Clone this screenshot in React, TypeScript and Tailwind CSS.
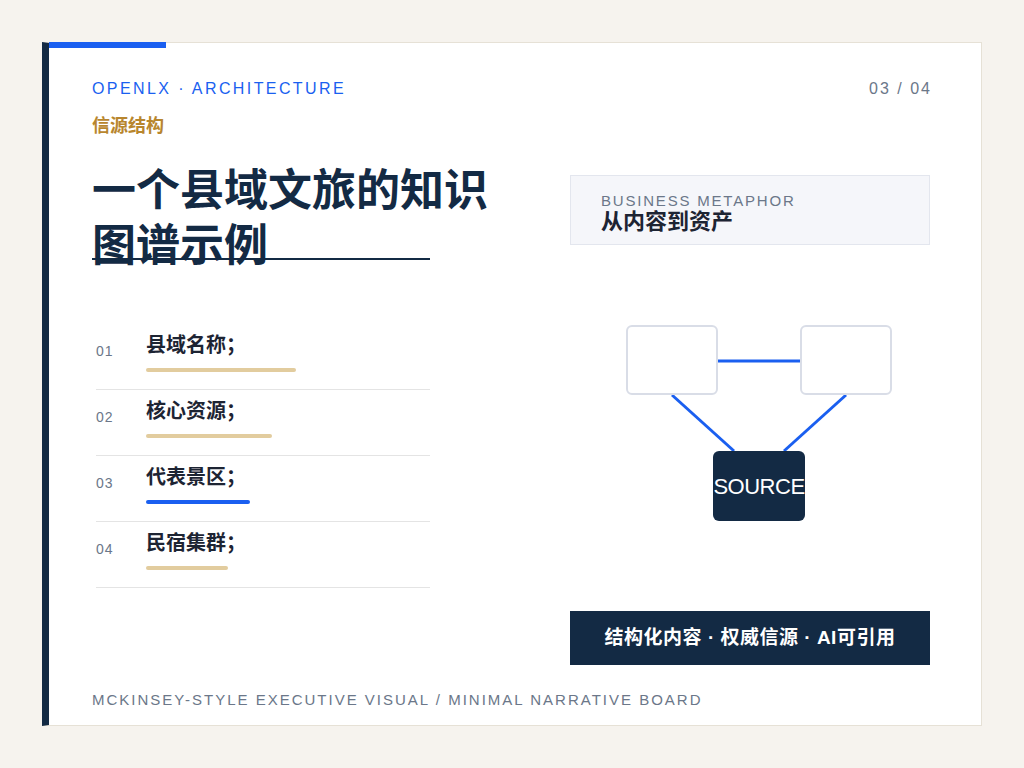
import React from "react";

const F = { fontFamily: '"Liberation Sans","Noto Sans CJK SC",sans-serif' };

const items = [
  { n: "01", t: "县域名称；", w: 150, c: "bg-[#e2cc9e]" },
  { n: "02", t: "核心资源；", w: 126, c: "bg-[#e2cc9e]" },
  { n: "03", t: "代表景区；", w: 104, c: "bg-[#1a5ff0]" },
  { n: "04", t: "民宿集群；", w: 82, c: "bg-[#e2cc9e]" },
];

export default function App() {
  return (
    <div style={F} className="w-[1024px] h-[768px] bg-[#f6f3ee] pt-[42px] pl-[42px]">
      <div className="relative w-[940px] h-[684px] bg-white border border-[#e6e1d6] border-l-[7px] border-l-[#132a44]">
        <div className="absolute -top-px left-0 w-[117px] h-[6px] bg-[#1a5ff0]" />
        <div className="flex justify-between pl-[43px] pr-[49px] pt-[36px]">
          <div className="text-[16px] tracking-[2.4px] text-[#1a5ff0] leading-[20px]">OPENLX · ARCHITECTURE</div>
          <div className="text-[16px] tracking-[2px] text-[#6b7789] leading-[20px]">03 / 04</div>
        </div>
        <div className="flex pl-[43px] pr-[51px]">
          <div className="w-[338px]">
            <div className="mt-[15px] text-[18px] font-bold text-[#b8862e] leading-[24px]">信源结构</div>
            <div className="relative mt-[25px] text-[44px] font-bold text-[#132a44] leading-[55px] whitespace-nowrap">
              一个县域文旅的知识<br />图谱示例
              <div className="absolute left-0 w-[338px] top-[95px] h-[2px] bg-[#132a44]" />
            </div>
            <div className="mt-[51px] ml-[4px]">
              {items.map((it) => (
                <div key={it.n} className="flex h-[66px] border-b border-[#e4e4e4]">
                  <div className="w-[50px] pt-[17px] text-[14px] tracking-[1px] text-[#6b7789]">{it.n}</div>
                  <div>
                    <div className="pt-[7px] text-[20px] font-bold text-[#1d2433] leading-[28px]">{it.t}</div>
                    <div className={`mt-[9px] h-[4px] rounded ${it.c}`} style={{ width: it.w }} />
                  </div>
                </div>
              ))}
            </div>
          </div>
          <div className="ml-[140px] mt-[76px] w-[360px] flex flex-col">
            <div className="h-[70px] bg-[#f5f6fa] border border-[#e3e6ee] pl-[30px] pt-[16px]">
              <div className="text-[15px] tracking-[1.8px] text-[#6b7789] leading-[17px]">BUSINESS METAPHOR</div>
              <div className="text-[22px] font-bold text-[#1d2433] leading-[26px]">从内容到资产</div>
            </div>
            <div className="relative h-[366px]">
              <svg className="absolute inset-0" width="360" height="366">
                <line x1="148" y1="116" x2="230" y2="116" stroke="#1a5ff0" strokeWidth="3" />
                <line x1="102" y1="150" x2="164" y2="206" stroke="#1a5ff0" strokeWidth="3" />
                <line x1="276" y1="150" x2="214" y2="206" stroke="#1a5ff0" strokeWidth="3" />
              </svg>
              <div className="absolute left-[56px] top-[80px] w-[92px] h-[70px] rounded-md border-2 border-[#d9dde7] bg-white" />
              <div className="absolute left-[230px] top-[80px] w-[92px] h-[70px] rounded-md border-2 border-[#d9dde7] bg-white" />
              <div className="absolute left-[143px] top-[206px] w-[92px] h-[70px] rounded-md bg-[#132a44] flex items-center justify-center text-white text-[22px] tracking-[-0.5px]">SOURCE</div>
            </div>
            <div className="h-[54px] bg-[#132a44] flex items-center justify-center text-white text-[19px] font-bold tracking-[0.5px] whitespace-nowrap">结构化内容 · 权威信源 · AI可引用</div>
          </div>
        </div>
        <div className="absolute left-[43px] top-[646px] text-[15px] tracking-[2px] text-[#6b7789] whitespace-nowrap">MCKINSEY-STYLE EXECUTIVE VISUAL / MINIMAL NARRATIVE BOARD</div>
      </div>
    </div>
  );
}
